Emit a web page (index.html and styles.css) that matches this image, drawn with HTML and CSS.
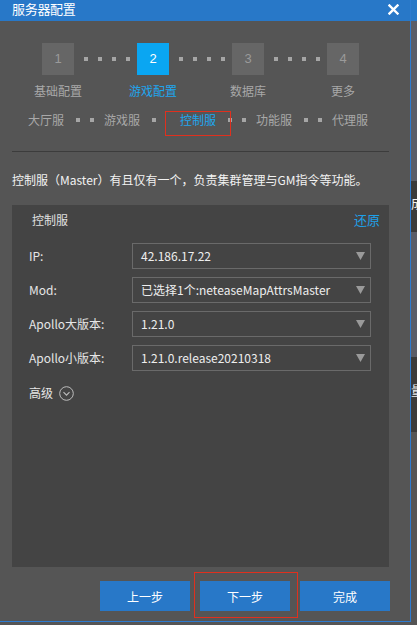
FILE: index.html
```html
<!DOCTYPE html>
<html lang="zh">
<head>
<meta charset="utf-8">
<title>服务器配置</title>
<link rel="stylesheet" href="styles.css">
</head>
<body>
<div class="screen">
  <div class="dialog">
    <div class="titlebar">
      <span class="title">服务器配置</span>
      <svg class="close" width="11" height="11" viewBox="0 0 11 11"><path d="M1.5 1.5 L9.5 9.5 M9.5 1.5 L1.5 9.5" stroke="#fff" stroke-width="2.4" stroke-linecap="square"/></svg>
    </div>
    <div class="body">
      <div class="steps">
        <div class="step"><div class="box">1</div><div class="label">基础配置</div></div>
        <div class="conn"><i></i><i></i><i></i><i></i></div>
        <div class="step active"><div class="box">2</div><div class="label">游戏配置</div></div>
        <div class="conn"><i></i><i></i><i></i><i></i></div>
        <div class="step"><div class="box">3</div><div class="label">数据库</div></div>
        <div class="conn"><i></i><i></i><i></i><i></i></div>
        <div class="step"><div class="box">4</div><div class="label">更多</div></div>
      </div>
      <div class="tabs">
        <span class="tab">大厅服</span>
        <span class="sep"><i></i><i></i></span>
        <span class="tab">游戏服</span>
        <span class="sep"><i></i><i class="hidden"></i></span>
        <span class="tab active">控制服<span class="mark"></span></span>
        <span class="sep"><i></i><i></i></span>
        <span class="tab">功能服</span>
        <span class="sep"><i></i><i></i></span>
        <span class="tab">代理服</span>
      </div>
      <div class="divider"></div>
      <p class="desc">控制服（Master）有且仅有一个，负责集群管理与GM指令等功能。</p>
      <div class="panel">
        <div class="panel-head"><span class="panel-title">控制服</span><span class="reset">还原</span></div>
        <div class="form">
          <span class="lbl">IP:</span>
          <div class="select"><span>42.186.17.22</span><svg class="arrow" width="9" height="8" viewBox="0 0 9 8"><path d="M0 0 H9 L4.5 8 Z" fill="#9a9a9a"/></svg></div>
          <span class="lbl">Mod:</span>
          <div class="select"><span>已选择1个:neteaseMapAttrsMaster</span><svg class="arrow" width="9" height="8" viewBox="0 0 9 8"><path d="M0 0 H9 L4.5 8 Z" fill="#9a9a9a"/></svg></div>
          <span class="lbl">Apollo大版本:</span>
          <div class="select"><span>1.21.0</span><svg class="arrow" width="9" height="8" viewBox="0 0 9 8"><path d="M0 0 H9 L4.5 8 Z" fill="#9a9a9a"/></svg></div>
          <span class="lbl">Apollo小版本:</span>
          <div class="select"><span>1.21.0.release20210318</span><svg class="arrow" width="9" height="8" viewBox="0 0 9 8"><path d="M0 0 H9 L4.5 8 Z" fill="#9a9a9a"/></svg></div>
        </div>
        <div class="adv">
          <span>高级</span>
          <svg width="15" height="15" viewBox="0 0 15 15"><circle cx="7.5" cy="7.5" r="6.8" fill="none" stroke="#bdbdbd" stroke-width="1"/><path d="M4.5 6.2 L7.5 9.2 L10.5 6.2" fill="none" stroke="#bdbdbd" stroke-width="1.1"/></svg>
        </div>
      </div>
      <div class="actions">
        <button class="btn">上一步</button>
        <button class="btn next">下一步<span class="mark"></span></button>
        <button class="btn">完成</button>
      </div>
    </div>
  </div>
  <div class="backdrop">
    <div class="bd-blue"></div>
    <div class="bd-light"></div>
    <div class="bd-dark a"><span>成</span></div>
    <div class="bd-light b"></div>
    <div class="bd-dark c"><span>量</span></div>
    <div class="bd-grey"></div>
  </div>
</div>
</body>
</html>
```
FILE: styles.css
```css
* { box-sizing: border-box; }
html, body { margin: 0; padding: 0; }
body {
  background: #555555;
  font-family: "Noto Sans CJK SC", "Noto Sans", sans-serif;
  font-size: 12px;
  line-height: 16px;
  color: #e6e6e6;
}
.screen {
  display: flex;
  width: 417px;
  height: 625px;
  overflow: hidden;
}
.dialog {
  width: 411px;
  height: 622px;
  flex: none;
  display: flex;
  flex-direction: column;
  background: #555555;
  border-right: 1px solid #2d7bd0;
  border-bottom: 1px solid #2d7bd0;
}
.titlebar {
  height: 21px;
  flex: none;
  background: #2878c8;
  display: flex;
  align-items: center;
  justify-content: space-between;
  padding: 0 10px 3px 12px;
  color: #ffffff;
  font-size: 13px;
}
.title { line-height: 16px; letter-spacing: -0.3px; }
.close { margin-top: 1px; margin-right: 1px; }
.body {
  flex: 1;
  padding: 0 21px 0 12px;
  display: flex;
  flex-direction: column;
}
/* steps */
.steps {
  display: flex;
  align-items: flex-start;
  margin-top: 22px;
  padding-left: 30px;
}
.step {
  width: 32px;
  display: flex;
  flex-direction: column;
  align-items: center;
}
.box {
  width: 32px;
  height: 32px;
  background: #666666;
  color: #9a9a9a;
  font-family: "Liberation Sans", "Noto Sans", sans-serif;
  font-size: 13px;
  display: flex;
  align-items: center;
  justify-content: center;
}
.step.active .box { background: #0aa6f2; color: #ffffff; }
.label {
  width: 32px;
  display: flex;
  justify-content: center;
  white-space: nowrap;
  margin-top: 8px;
  color: #a8a8a8;
  font-size: 12px;
}
.step.active .label { color: #1ea6ee; }
.conn {
  width: 63px;
  height: 32px;
  display: flex;
  align-items: center;
  padding-left: 10px;
  gap: 10px;
}
.conn i, .sep i {
  display: block;
  width: 4px;
  height: 4px;
  background: #a6a6a6;
}
/* tabs */
.tabs {
  display: flex;
  align-items: center;
  margin-top: 13px;
  padding-left: 16px;
  color: #a8a8a8;
  white-space: nowrap;
}
.tab { position: relative; width: 36px; }
.tab.active { color: #1ea6ee; }
.sep { display: flex; gap: 10px; margin: 0 10px 0 12px; }
.sep i.hidden { visibility: hidden; }
.tab .mark {
  position: absolute;
  left: -15px;
  right: -15px;
  top: -1px;
  bottom: -8px;
  border: 1px solid #e0301e;
}
.divider {
  height: 1px;
  background: #3c3c3c;
  margin-top: 23px;
}
.desc {
  margin: 20px 0 0 0;
  color: #f2f2f2;
  white-space: nowrap;
}
/* panel */
.panel {
  margin-top: 17px;
  height: 362px;
  background: #444444;
  display: flex;
  flex-direction: column;
}
.panel-head {
  display: flex;
  justify-content: space-between;
  padding: 7px 9px 0 20px;
}
.panel-title { color: #e0e0e0; }
.reset { color: #1ea0e8; font-size: 13px; }
.form {
  margin-top: 15px;
  padding: 0 18px 0 17px;
  display: grid;
  grid-template-columns: 103px 1fr;
  grid-auto-rows: 26px;
  row-gap: 8px;
  align-items: center;
}
.lbl { color: #e6e6e6; white-space: nowrap; }
.select {
  height: 26px;
  border: 1px solid #6a6a6a;
  background: #444444;
  display: flex;
  align-items: center;
  justify-content: space-between;
  padding: 0 5px 0 8px;
  color: #eeeeee;
  white-space: nowrap;
}
.arrow { flex: none; }
.adv {
  display: flex;
  align-items: center;
  gap: 6px;
  margin-top: 14px;
  padding-left: 17px;
  color: #e6e6e6;
}
/* actions */
.actions {
  margin-top: 14px;
  display: flex;
  justify-content: flex-end;
  gap: 10px;
  padding-right: 0;
  margin-right: -1px;
}
.btn {
  position: relative;
  width: 90px;
  height: 30px;
  border: none;
  background: #2878c8;
  color: #ffffff;
  font-family: "Noto Sans CJK SC", "Noto Sans", sans-serif;
  font-size: 12px;
  padding: 0;
}
.btn .mark {
  position: absolute;
  left: -6px;
  right: -8px;
  top: -9px;
  bottom: -7px;
  border: 1px solid #e0301e;
}
/* backdrop */
.backdrop {
  flex: 1;
  display: flex;
  flex-direction: column;
  overflow: hidden;
}
.backdrop > div { flex: none; overflow: hidden; white-space: nowrap; color: #f0f0f0; font-size: 13px; }
.bd-blue { height: 21px; background: #2878c8; }
.bd-light { height: 160px; background: #5a5d68; }
.bd-dark.a { height: 51px; background: #3a3a3a; padding-top: 14px; }
.bd-light.b { height: 125px; }
.bd-dark.c { height: 75px; background: #3a3a3a; padding-top: 25px; }
.bd-grey { flex: 1 !important; background: #555555; }
```
